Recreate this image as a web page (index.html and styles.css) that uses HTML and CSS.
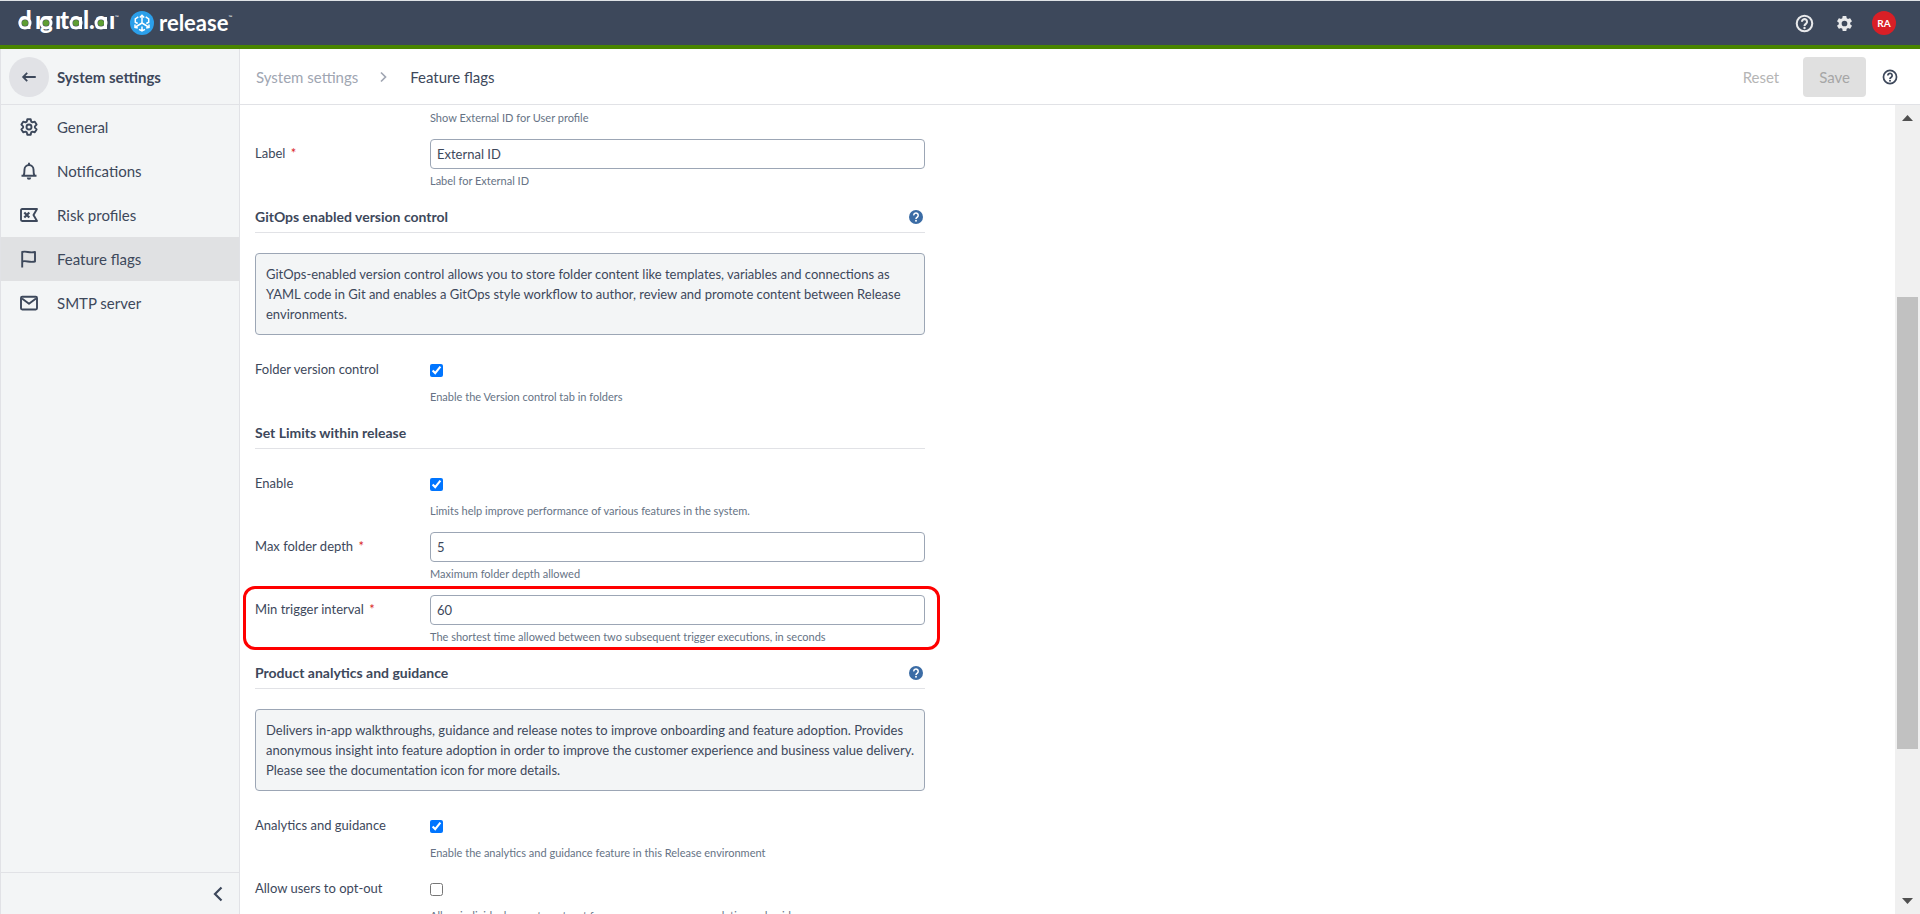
FILE: index.html
```html
<!DOCTYPE html>
<html lang="en">
<head>
<meta charset="utf-8">
<title>Feature flags - System settings</title>
<link rel="stylesheet" href="styles.css">
</head>
<body>
<header class="topbar">
  <a class="brand" href="#" aria-label="digital.ai release">
    <svg class="brand-name" viewBox="0 0 98 32" aria-hidden="true">
      <text y="22" x="1 18 23 38 43 53 66 72 78 92">dıgıtal.aı</text>
      <g class="rings">
        <circle cx="8" cy="16" r="5"/>
        <circle cx="29" cy="16" r="5"/>
        <circle cx="59" cy="16" r="5"/>
        <circle cx="84" cy="16" r="5"/>
      </g>
      <g class="stems">
        <rect x="62" y="10" width="3" height="12"/>
        <rect x="87" y="10" width="3" height="12"/>
      </g>
      <g class="dots">
        <circle cx="8" cy="16" r="3"/>
        <circle cx="29" cy="16" r="3"/>
        <circle cx="59" cy="16" r="3"/>
        <circle cx="84" cy="16" r="3"/>
      </g>
    </svg>
    <span class="tm">™</span>
    <svg class="brand-mark" viewBox="0 0 24 24" aria-hidden="true">
      <circle cx="12" cy="12" r="12" fill="#2b9fea"/>
      <g fill="none" stroke="#fff" stroke-width="1.5">
        <path d="M12 4.500v7.500l-6.500 4M12 12l6.500 4"/>
        <path d="M9.800 6.500 12 4.300l2.200 2.200M5 13.500v2.800l2.800.7M19 13.500v2.800l-2.800.7"/>
        <path d="M8.300 5.800 5.300 7.800v3.400l2.400 1.300M15.700 5.800l3 2v3.400l-2.400 1.300M9 18.300l3 1.600 3-1.600M12 15.500v4"/>
      </g>
    </svg>
    <span class="product">release</span>
    <span class="tm">™</span>
  </a>
  <div class="topbar-actions">
    <button class="icon-btn" type="button" aria-label="Help">
      <svg class="icon-lg" viewBox="0 0 24 24"><use href="#help-outline"/></svg>
    </button>
    <button class="icon-btn" type="button" aria-label="Settings">
      <svg class="icon-lg" viewBox="0 0 24 24"><path fill="currentColor" d="M19.140 12.940c.04-.3.060-.610.060-.940 0-.320-.020-.640-.070-.940l2.030-1.580a.49.49 0 0 0 .120-.610l-1.920-3.320a.488.488 0 0 0-.590-.220l-2.390.960c-.5-.380-1.030-.7-1.620-.940l-.360-2.540a.484.484 0 0 0-.480-.410h-3.840c-.240 0-.430.170-.470.410l-.360 2.540c-.590.240-1.130.570-1.620.940l-2.390-.960c-.220-.080-.470 0-.590.220L2.740 8.870c-.120.210-.080.470.120.610l2.030 1.580c-.050.3-.090.630-.090.940s.020.640.070.940l-2.030 1.580a.49.49 0 0 0-.120.610l1.920 3.320c.120.220.370.290.590.220l2.390-.960c.5.380 1.030.7 1.620.940l.360 2.540c.050.240.240.410.480.410h3.840c.240 0 .440-.170.470-.410l.360-2.540c.590-.240 1.130-.560 1.620-.940l2.390.960c.220.080.470 0 .590-.220l1.920-3.320c.120-.220.070-.470-.120-.610l-2.010-1.580zM12 15.600A3.600 3.600 0 1 1 12 8.400a3.600 3.600 0 0 1 0 7.200z"/></svg>
    </button>
    <button class="avatar" type="button">RA</button>
  </div>
</header>

<div class="layout">
  <aside class="sidebar">
    <div class="sidebar-head">
      <button class="back" type="button" aria-label="Back">
        <svg viewBox="0 0 20 20" fill="none" stroke="currentColor" stroke-width="2"><path d="M17.500 10H4M8 5.500 3.500 10 8 14.500"/></svg>
      </button>
      <h2 class="sidebar-title">System settings</h2>
    </div>
    <nav class="nav">
      <a class="nav-item" href="#">
        <svg viewBox="0 0 18 18" fill="none" stroke="currentColor" stroke-width="1.900" stroke-linejoin="round"><path d="M7.300 1.300h3.400l.5 2.300 1.300.8 2.300-.7 1.800 2.900-1.700 1.700v1.400l1.700 1.700-1.800 2.900-2.300-.7-1.300.8-.5 2.300H7.300l-.5-2.300-1.300-.8-2.300.7-1.800-2.900 1.700-1.700V8.300L1.400 6.600l1.800-2.900 2.300.7 1.300-.8z"/><circle cx="9" cy="9" r="2.500"/></svg>
        General</a>
      <a class="nav-item" href="#">
        <svg viewBox="0 0 18 18" fill="none" stroke="currentColor" stroke-width="1.900" stroke-linejoin="round"><path d="M1.500 13.800h15M3.500 13.500C4.500 12 4.500 10.500 4.500 7.500a4.500 4.500 0 0 1 9 0c0 3 0 4.500 1 6M9 .8v2"/><path d="M6.800 15.500h4.400a2.200 2.200 0 0 1-4.400 0z" fill="currentColor" stroke="none"/></svg>
        Notifications</a>
      <a class="nav-item" href="#">
        <svg viewBox="0 0 18 18" fill="none" stroke="currentColor" stroke-width="1.900" stroke-linejoin="round"><path d="M17 3H2.200Q1 3 1 4.200v9.600Q1 15 2.200 15H17l-3.500-6z"/><path d="m4.300 6.500 5 5M9.300 6.500l-5 5" stroke-width="2.200"/></svg>
        Risk profiles</a>
      <a class="nav-item active" href="#" aria-current="page">
        <svg viewBox="0 0 18 18" fill="none" stroke="currentColor" stroke-width="1.900" stroke-linejoin="round"><path d="M2.200 17.500V2c4-1.500 7 1.500 12.800 0v9.500c-5.800 1.500-8.800-1.500-12.800 0"/></svg>
        Feature flags</a>
      <a class="nav-item" href="#">
        <svg viewBox="0 0 18 18" fill="none" stroke="currentColor" stroke-width="1.900" stroke-linejoin="round"><rect x="1" y="2.800" width="16" height="12.700" rx="1.200"/><path d="M2 4.500 9 9.800l7-5.300"/></svg>
        SMTP server</a>
    </nav>
    <div class="sidebar-foot">
      <button class="collapse" type="button" aria-label="Collapse sidebar">
        <svg viewBox="0 0 16 16" fill="none" stroke="currentColor" stroke-width="2.200"><path d="M11.500 1.500 5 8l6.500 6.500"/></svg>
      </button>
    </div>
  </aside>

  <main class="main">
    <div class="page-head">
      <nav class="crumbs" aria-label="Breadcrumb">
        <a class="crumb-link" href="#">System settings</a>
        <svg class="crumb-sep" viewBox="0 0 12 12" fill="none" stroke="currentColor" stroke-width="1.700"><path d="m3 1.500 4.500 4.500L3 10.500"/></svg>
        <span>Feature flags</span>
      </nav>
      <div class="page-actions">
        <button class="btn" type="button" disabled>Reset</button>
        <button class="btn btn-save" type="button" disabled>Save</button>
        <button class="icon-btn page-help" type="button" aria-label="Page help">
          <svg class="icon-md" viewBox="0 0 24 24"><use href="#help-outline"/></svg>
        </button>
      </div>
    </div>

    <div class="scroll-area">
      <form class="form">
        <p class="help help-first">Show External ID for User profile</p>
        <div class="row">
          <label class="label" for="ext-label">Label <span class="req">*</span></label>
          <div class="control"><input class="input" id="ext-label" type="text" value="External ID"></div>
          <p class="help">Label for External ID</p>
        </div>

        <div class="section-head">
          <h3>GitOps enabled version control</h3>
          <a class="doc" href="#" aria-label="GitOps documentation"><svg class="icon-doc" viewBox="0 0 24 24"><use href="#help-solid"/></svg></a>
        </div>
        <p class="note">GitOps-enabled version control allows you to store folder content like templates, variables and connections as YAML code in Git and enables a GitOps style workflow to author, review and promote content between Release environments.</p>
        <div class="row">
          <label class="label" for="folder-vc">Folder version control</label>
          <div class="control"><input class="check" id="folder-vc" type="checkbox" checked></div>
          <p class="help">Enable the Version control tab in folders</p>
        </div>

        <div class="section-head">
          <h3>Set Limits within release</h3>
        </div>
        <div class="row">
          <label class="label" for="limits">Enable</label>
          <div class="control"><input class="check" id="limits" type="checkbox" checked></div>
          <p class="help">Limits help improve performance of various features in the system.</p>
        </div>
        <div class="row">
          <label class="label" for="depth">Max folder depth <span class="req">*</span></label>
          <div class="control"><input class="input" id="depth" type="text" value="5"></div>
          <p class="help">Maximum folder depth allowed</p>
        </div>
        <div class="row marked">
          <label class="label" for="interval">Min trigger interval <span class="req">*</span></label>
          <div class="control"><input class="input" id="interval" type="text" value="60"></div>
          <p class="help">The shortest time allowed between two subsequent trigger executions, in seconds</p>
        </div>

        <div class="section-head">
          <h3>Product analytics and guidance</h3>
          <a class="doc" href="#" aria-label="Analytics documentation"><svg class="icon-doc" viewBox="0 0 24 24"><use href="#help-solid"/></svg></a>
        </div>
        <p class="note">Delivers in-app walkthroughs, guidance and release notes to improve onboarding and feature adoption. Provides anonymous insight into feature adoption in order to improve the customer experience and business value delivery. Please see the documentation icon for more details.</p>
        <div class="row">
          <label class="label" for="analytics">Analytics and guidance</label>
          <div class="control"><input class="check" id="analytics" type="checkbox" checked></div>
          <p class="help">Enable the analytics and guidance feature in this Release environment</p>
        </div>
        <div class="row">
          <label class="label" for="optout">Allow users to opt-out</label>
          <div class="control"><input class="check" id="optout" type="checkbox"></div>
          <p class="help">Allow individual users to opt-out from anonymous usage analytics and guidance</p>
        </div>
      </form>
      <div class="scrollbar" aria-hidden="true">
        <svg viewBox="0 0 25 25"><path d="M7 16h11l-5.500-6z" fill="#505050"/></svg>
        <div class="track"><div class="thumb"></div></div>
        <svg viewBox="0 0 25 25"><path d="M7 9h11l-5.500 6z" fill="#505050"/></svg>
      </div>
    </div>
  </main>
</div>

<svg class="defs" aria-hidden="true">
  <symbol id="help-outline" viewBox="0 0 24 24"><path fill="none" stroke="currentColor" stroke-width="2.600" d="M12 2.200a9.800 9.800 0 1 0 0 19.600 9.800 9.800 0 0 0 0-19.600zM8.800 9.800a3.200 3.200 0 1 1 5.400 2.200c-1.100 1.100-2.200 1.500-2.200 3"/><circle cx="12" cy="17.700" r="1.500" fill="currentColor"/></symbol>
  <symbol id="help-solid" viewBox="0 0 24 24"><circle cx="12" cy="12" r="12" fill="currentColor"/><path fill="none" stroke="#fff" stroke-width="2.600" d="M8.200 9.200a3.800 3.800 0 1 1 6.400 2.600C13.300 13 12 13.500 12 15.500"/><circle cx="12" cy="18.500" r="1.600" fill="#fff"/></symbol>
</svg>
</body>
</html>
```
FILE: styles.css
```css
* { box-sizing: border-box; }

body {
  margin: 0;
  height: 100vh;
  display: flex;
  flex-direction: column;
  overflow: hidden;
  font: 13px/20px Lato, sans-serif;
  color: #3d485b;
  background: #fff;
}

h2, h3, p { margin: 0; }
a { color: inherit; text-decoration: none; }
svg { display: block; }
.defs { display: none; }

button {
  font: inherit;
  color: inherit;
  border: 0;
  padding: 0;
  background: none;
}

/* Top bar */
.topbar {
  flex: none;
  display: flex;
  align-items: center;
  justify-content: space-between;
  height: 49px;
  padding: 0 24px 0 17px;
  background: #3d485b;
  border-top: 1px solid #dfe3e6;
  border-bottom: 4px solid #498500;
  color: #fff;
}
.brand { display: flex; align-items: center; }
.brand-name { width: 98px; height: 32px; overflow: visible; font: 900 24px Lato, sans-serif; fill: #fff; }
.rings { fill: #3d485b; stroke: #fff; stroke-width: 3; }
.stems { fill: #fff; }
.dots { fill: #5f9e33; }
.tm { align-self: flex-start; width: 4px; font-size: 5px; line-height: 20px; }
.brand-mark { width: 24px; height: 24px; margin: 0 5px 0 11px; }
.product { font: 700 22px/28px Lato, sans-serif; }
.topbar-actions { display: flex; align-items: center; gap: 16px; color: #e8e9eb; }
.icon-btn { display: grid; place-items: center; }
.topbar .icon-btn { width: 24px; height: 24px; }
.icon-lg { width: 19px; height: 19px; }
.icon-md { width: 16px; height: 16px; }
.icon-doc { width: 14px; height: 14px; }
.avatar {
  width: 24px;
  height: 24px;
  border-radius: 50%;
  background: #d91f26;
  color: #fff;
  font-size: 10px;
  font-weight: 700;
}

/* Sidebar */
.layout { flex: 1; display: flex; min-height: 0; }
.sidebar {
  flex: none;
  width: 240px;
  display: flex;
  flex-direction: column;
  background: #f3f5f6;
  border: solid #e1e2e6;
  border-width: 0 1px;
}
.sidebar-head {
  display: flex;
  align-items: center;
  gap: 8px;
  height: 56px;
  padding-left: 8px;
  border-bottom: 1px solid #e1e2e6;
}
.back {
  display: grid;
  place-items: center;
  width: 40px;
  height: 40px;
  border-radius: 50%;
  background: #e1e2e6;
}
.back svg { width: 18px; height: 18px; }
.sidebar-title { font-size: 15px; font-weight: 700; line-height: 20px; }
.nav { flex: 1; }
.nav-item {
  display: flex;
  align-items: center;
  gap: 19px;
  height: 44px;
  padding-left: 19px;
  font-size: 15px;
}
.nav-item svg { width: 18px; height: 18px; }
.nav-item.active { background: #e0e1e3; }
.sidebar-foot {
  display: flex;
  align-items: center;
  justify-content: flex-end;
  height: 42px;
  padding-right: 13px;
  border-top: 1px solid #e1e2e6;
}
.collapse svg { width: 16px; height: 16px; }

/* Page header */
.main { flex: 1; min-width: 0; display: flex; flex-direction: column; }
.page-head {
  flex: none;
  display: flex;
  align-items: center;
  justify-content: space-between;
  height: 56px;
  padding: 0 22px 0 16px;
  border-bottom: 1px solid #e1e2e6;
  font-size: 15px;
}
.crumbs { display: flex; align-items: center; gap: 20px; }
.crumb-link { color: #a0a6b2; }
.crumb-sep { width: 12px; height: 12px; color: #a0a6b2; }
.page-actions { display: flex; align-items: center; gap: 8px; }
.page-help { margin-left: 8px; }
.btn { height: 40px; padding: 0 16px; color: #b5b5b5; }
.btn-save { border-radius: 4px; background: #e0e0e0; color: #a6a6a6; }

/* Form */
.scroll-area {
  flex: 1;
  min-height: 0;
  display: flex;
  justify-content: space-between;
  overflow: hidden;
}
.form { width: 685px; padding-left: 15px; }
.row {
  display: grid;
  grid-template-columns: 175px 1fr;
  grid-template-rows: 30px 16px;
  row-gap: 4px;
  padding-bottom: 13px;
}
.label { line-height: 28px; }
.req { margin-left: 2px; color: #d91f26; }
.control { display: flex; align-items: center; }
.input {
  width: 100%;
  height: 30px;
  padding: 0 6px;
  border: 1px solid #9ca6b5;
  border-radius: 4px;
  font: inherit;
  color: inherit;
  background: #fff;
}
.check { width: 13px; height: 13px; margin: 0; accent-color: #0075ff; }
.help { grid-column: 2; font-size: 11px; line-height: 16px; color: #667385; }
.help-first { padding: 5px 0 13px 175px; }
.section-head {
  display: flex;
  align-items: center;
  justify-content: space-between;
  height: 31px;
  padding-right: 2px;
  margin-bottom: 20px;
  border-bottom: 1px solid #e1e2e6;
}
.section-head h3 { font-size: 14px; font-weight: 700; line-height: 30px; }
.doc { color: #3b6ca5; }
.note {
  margin-bottom: 20px;
  padding: 10px;
  border: 1px solid #9ca6b5;
  border-radius: 4px;
  background: #f3f5f6;
}

/* Highlight ring around a row */
.marked { position: relative; }
.marked::after {
  content: "";
  position: absolute;
  inset: -9px -15px 8px -12px;
  border: 3px solid #f00;
  border-radius: 12px;
  pointer-events: none;
}

/* Scroll bar */
.scrollbar { flex: none; width: 25px; display: flex; flex-direction: column; background: #f0f0f0; }
.track { flex: 1; display: grid; grid-template-rows: 167fr 452fr 140fr; padding: 0 2px; }
.thumb { grid-row: 2; background: #c1c1c1; }
```
